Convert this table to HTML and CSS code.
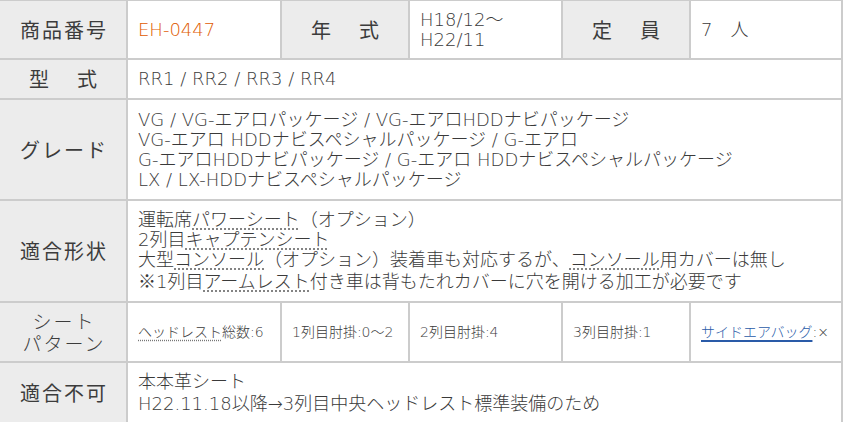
FILE: index.html
```html
<!DOCTYPE html>
<html>
<head>
  <meta charset="UTF-8">
  <title>適合表 EH-0447</title>
  <link rel="stylesheet" href="styles.css">
</head>
<body>
  <table class="spec">
    <colgroup>
      <col class="c1"><col class="c2"><col class="c3"><col class="c4"><col class="c5"><col class="c6">
    </colgroup>
    <tr class="r1">
      <th class="label">商品番号</th>
      <td class="code">EH-0447</td>
      <th class="label spaced">年　式</th>
      <td class="year">H18/12～<br>H22/11</td>
      <th class="label spaced">定　員</th>
      <td>7　人</td>
    </tr>
    <tr class="r2">
      <th class="label spaced">型　式</th>
      <td colspan="5">RR1 / RR2 / RR3 / RR4</td>
    </tr>
    <tr class="r3">
      <th class="label">グレード</th>
      <td colspan="5">VG / VG-エアロパッケージ / VG-エアロHDDナビパッケージ<br>VG-エアロ HDDナビスペシャルパッケージ / G-エアロ<br>G-エアロHDDナビパッケージ / G-エアロ HDDナビスペシャルパッケージ<br>LX / LX-HDDナビスペシャルパッケージ</td>
    </tr>
    <tr class="r4">
      <th class="label">適合形状</th>
      <td colspan="5">運転席<span class="term">パワーシート</span>（オプション）<br>2列目<span class="term">キャプテンシート</span><br>大型<span class="term">コンソール</span>（オプション）装着車も対応するが、<span class="term">コンソール</span>用カバーは無し<br><span class="cjk">※</span>1列目<span class="term">アームレスト</span>付き車は背もたれカバーに穴を開ける加工が必要です</td>
    </tr>
    <tr class="r5">
      <th class="label thin">シート<br>パターン</th>
      <td class="small"><span class="term">ヘッドレスト</span>総数:6</td>
      <td class="small">1列目肘掛:0～2</td>
      <td class="small">2列目肘掛:4</td>
      <td class="small">3列目肘掛:1</td>
      <td class="small"><a href="#">サイドエアバッグ</a>:×</td>
    </tr>
    <tr class="r6">
      <th class="label">適合不可</th>
      <td colspan="5" class="loose">本本革シート<br>H22.11.18以降→3列目中央ヘッドレスト標準装備のため</td>
    </tr>
  </table>
</body>
</html>
```

FILE: styles.css
```css
body {
  margin: 0;
  background: #fff;
  font-family: "DejaVu Sans", "Noto Sans CJK JP", sans-serif;
  color: #3a3a3a;
}
.spec {
  table-layout: fixed;
  width: 845px;
  margin: -1px 0 0 -2px;
  border-collapse: separate;
  border-spacing: 0;
  border-top: 2px solid #ccc;
  border-left: 2px solid #ccc;
}
.c1, .c3, .c5 { width: 128px; }
.c2 { width: 154px; }
.c4 { width: 153px; }
.c6 { width: 152px; }
.spec th,
.spec td {
  border-right: 2px solid #ccc;
  border-bottom: 2px solid #ccc;
  vertical-align: middle;
  padding: 0 0 0 10px;
  font-size: 18px;
  font-weight: 300;
  line-height: 20px;
  text-align: left;
}
.r1 { height: 59px; }
.r2 { height: 40px; }
.r3 { height: 101px; }
.r4 { height: 102px; }
.r5 { height: 60px; }
.r6 { height: 62px; }
.spec th.label {
  background: #ececec;
  color: #3c3c3c;
  font-family: "Noto Sans CJK JP", sans-serif;
  font-size: 20px;
  font-weight: 400;
  text-align: center;
  letter-spacing: 2px;
  padding: 0 0 0 2px;
}
.spec th.spaced {
  letter-spacing: 4px;
  padding-left: 4px;
}
.spec th.thin {
  font-weight: 300;
  font-size: 19px;
  line-height: 22px;
}
.spec td.code { color: #e05a00; }
.spec td.small { font-size: 14px; }
.spec td.loose { line-height: 22px; }
.cjk { font-family: "Noto Sans CJK JP", sans-serif; }
.term {
  text-decoration: underline dotted #777;
  text-underline-offset: 3px;
}
.spec a {
  color: #2a5ba8;
  text-decoration: underline;
  text-decoration-thickness: 2px;
  text-underline-offset: 3px;
}
```
